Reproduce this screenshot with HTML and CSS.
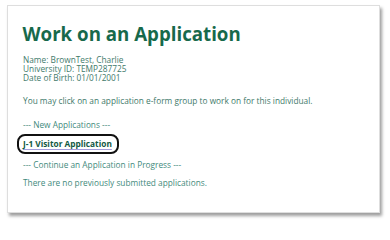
FILE: index.html
```html
<!DOCTYPE html>
<html>
<head>
<meta charset="utf-8">
<link rel="stylesheet" href="styles.css">
</head>
<body>
<div class="card">
  <h1 class="title">Work on an Application</h1>
  <div class="info">
    <div>Name: BrownTest, Charlie</div>
    <div>University ID: TEMP287725</div>
    <div>Date of Birth: 01/01/2001</div>
  </div>
  <p class="intro">You may click on an application e-form group to work on for this individual.</p>
  <p class="section new">--- New Applications ---</p>
  <div class="linkrow"><a class="applink" href="#">J-1 Visitor Application</a></div>
  <p class="section cont">--- Continue an Application in Progress ---</p>
  <p class="section none">There are no previously submitted applications.</p>
</div>
</body>
</html>
```
FILE: styles.css
```css
html, body {
  margin: 0;
  padding: 0;
  background: #ffffff;
}
body {
  font-family: "Open Sans", "Noto Sans", sans-serif;
  width: 390px;
  height: 225px;
  overflow: hidden;
}
.card {
  box-sizing: border-box;
  margin: 5px 0 0 7px;
  width: 373px;
  height: 208px;
  background: #ffffff;
  border: 1px solid #dedede;
  box-shadow: 2px 3px 3px rgba(0, 0, 0, 0.38);
  padding: 16px 16px 0 15px;
}
.title {
  margin: 0 0 0 -0.5px;
  font-size: 18.7px;
  line-height: 24px;
  font-weight: 700;
  color: #17694b;
}
.info {
  margin-top: 9px;
  font-size: 8.3px;
  line-height: 9px;
  color: #427a6b;
}
.intro {
  margin: 13.5px 0 0;
  font-size: 8.3px;
  line-height: 9.4px;
  color: #427a6b;
}
.section {
  margin: 0;
  font-size: 8.3px;
  line-height: 9.4px;
  color: #3f8a7c;
}
.new {
  margin-top: 15.5px;
}
.linkrow {
  margin-top: 4.5px;
  font-size: 8.3px;
  line-height: 9.4px;
}
.applink {
  display: inline-block;
  margin-left: -6px;
  padding: 3px 5px 3px 4px;
  border: 2px solid #111111;
  border-radius: 8px;
  font-weight: 700;
  color: #125a43;
  text-decoration: underline;
  text-decoration-color: #a49ddb;
  text-underline-offset: 1.5px;
}
.cont {
  margin-top: 6px;
}
.none {
  margin-top: 8.6px;
}
```
